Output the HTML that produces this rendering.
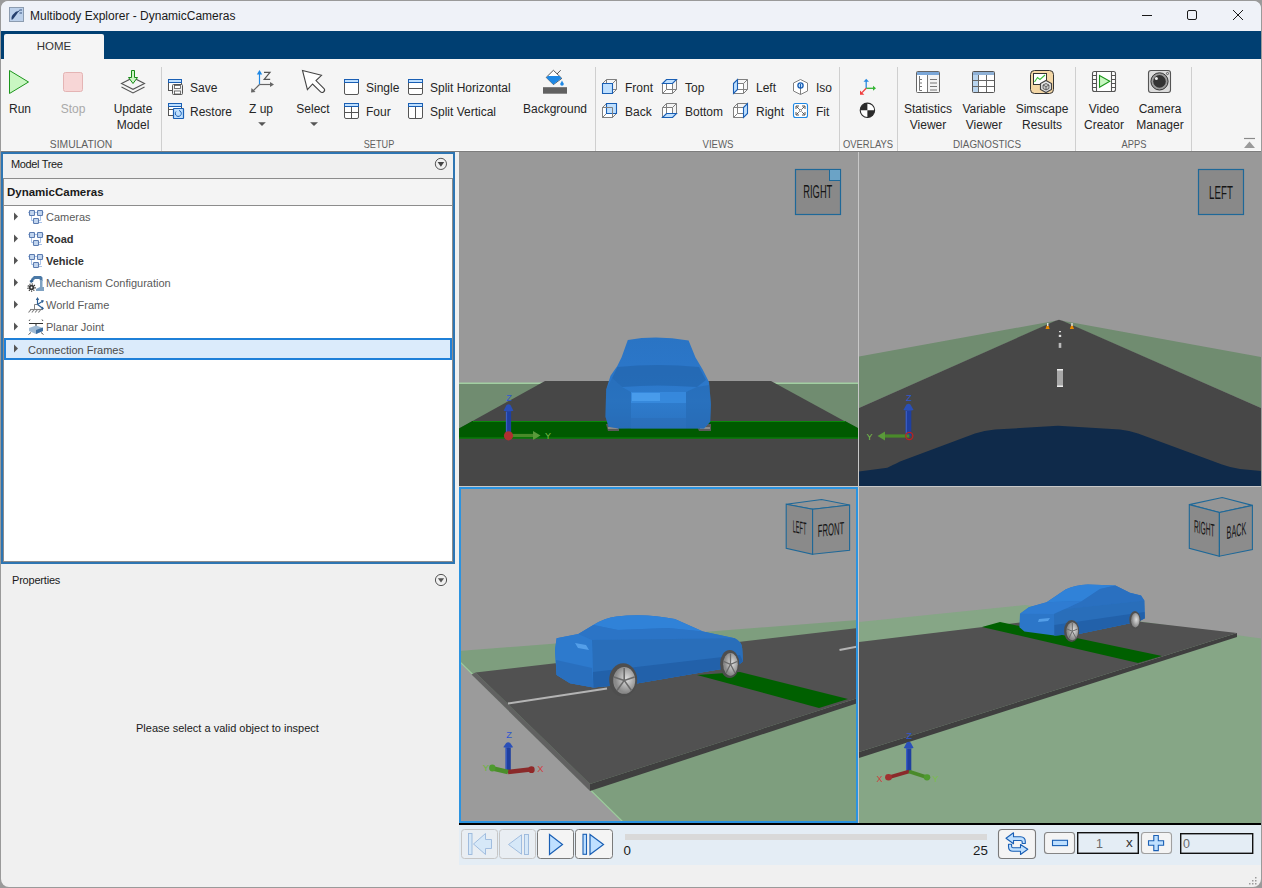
<!DOCTYPE html>
<html><head><meta charset="utf-8">
<style>
html,body{margin:0;padding:0;width:1262px;height:888px;overflow:hidden;background:#f0f0f0;}
body{position:relative;font-family:"Liberation Sans",sans-serif;font-size:12px;color:#222;}
.a{position:absolute;}
.t{position:absolute;white-space:nowrap;line-height:14px;font-size:12px;color:#262626;}
.c{text-align:center;}
.sl{position:absolute;white-space:nowrap;line-height:13px;font-size:11px;color:#5f5f5f;}
.sep{position:absolute;top:67px;width:1px;height:84px;background:#cfcfcf;}
svg{position:absolute;overflow:visible;}
</style></head>
<body>
<!-- window frame -->
<div class="a" style="left:0;top:0;width:1262px;height:888px;background:#9a9a9a;"></div>
<div class="a" style="left:1px;top:1px;width:1260px;height:886px;background:#f0f0f0;border-radius:8px;"></div>
<!-- title bar -->
<div class="a" style="left:1px;top:1px;width:1260px;height:30px;background:#eff2f8;border-radius:7px 7px 0 0;"></div>
<div class="t" style="left:30px;top:9px;color:#1a1a1a;">Multibody Explorer - DynamicCameras</div>
<!-- ribbon tab bar -->
<div class="a" style="left:1px;top:31px;width:1260px;height:28px;background:#003f72;"></div>
<div class="a" style="left:4px;top:34px;width:100px;height:25px;background:#f5f5f5;border-radius:2px 2px 0 0;"></div>
<div class="t" style="left:4px;top:39px;width:100px;text-align:center;color:#333;font-size:11.5px;">HOME</div>
<!-- ribbon body -->
<div class="a" style="left:1px;top:59px;width:1260px;height:92px;background:#f5f5f5;"></div>
<div class="a" style="left:1px;top:150px;width:1260px;height:1px;background:#fbfbfb;"></div>
<div class="a" style="left:1px;top:151px;width:1260px;height:1px;background:#7d7d7d;"></div>


<!-- ribbon content -->
<div class="sep" style="left:161px;"></div>
<div class="sep" style="left:595px;"></div>
<div class="sep" style="left:839px;"></div>
<div class="sep" style="left:897px;"></div>
<div class="sep" style="left:1075px;"></div>
<div class="sep" style="left:1191px;"></div>

<div class="t c" style="left:-30px;width:100px;top:102px;">Run</div>
<div class="t c" style="left:23px;width:100px;top:102px;color:#a9a9a9;">Stop</div>
<div class="t c" style="left:83px;width:100px;top:102px;">Update</div>
<div class="t c" style="left:83px;width:100px;top:118px;">Model</div>
<div class="t" style="left:190px;top:81px;">Save</div>
<div class="t" style="left:190px;top:105px;">Restore</div>
<div class="t c" style="left:211px;width:100px;top:102px;">Z up</div>
<div class="t c" style="left:263px;width:100px;top:102px;">Select</div>
<div class="t" style="left:366px;top:81px;">Single</div>
<div class="t" style="left:366px;top:105px;">Four</div>
<div class="t" style="left:430px;top:81px;">Split Horizontal</div>
<div class="t" style="left:430px;top:105px;">Split Vertical</div>
<div class="t c" style="left:505px;width:100px;top:102px;">Background</div>
<div class="t" style="left:625px;top:81px;">Front</div>
<div class="t" style="left:625px;top:105px;">Back</div>
<div class="t" style="left:685px;top:81px;">Top</div>
<div class="t" style="left:685px;top:105px;">Bottom</div>
<div class="t" style="left:756px;top:81px;">Left</div>
<div class="t" style="left:756px;top:105px;">Right</div>
<div class="t" style="left:816px;top:81px;">Iso</div>
<div class="t" style="left:816px;top:105px;">Fit</div>
<div class="t c" style="left:878px;width:100px;top:102px;">Statistics</div>
<div class="t c" style="left:878px;width:100px;top:118px;">Viewer</div>
<div class="t c" style="left:934px;width:100px;top:102px;">Variable</div>
<div class="t c" style="left:934px;width:100px;top:118px;">Viewer</div>
<div class="t c" style="left:992px;width:100px;top:102px;">Simscape</div>
<div class="t c" style="left:992px;width:100px;top:118px;">Results</div>
<div class="t c" style="left:1054px;width:100px;top:102px;">Video</div>
<div class="t c" style="left:1054px;width:100px;top:118px;">Creator</div>
<div class="t c" style="left:1110px;width:100px;top:102px;">Camera</div>
<div class="t c" style="left:1110px;width:100px;top:118px;">Manager</div>

<div class="sl c" style="left:31.2px;width:100px;top:137.7px;transform:scaleX(0.938);">SIMULATION</div>
<div class="sl c" style="left:328.8px;width:100px;top:137.7px;transform:scaleX(0.831);">SETUP</div>
<div class="sl c" style="left:668.0px;width:100px;top:137.7px;transform:scaleX(0.873);">VIEWS</div>
<div class="sl c" style="left:818.3px;width:100px;top:137.7px;transform:scaleX(0.855);">OVERLAYS</div>
<div class="sl c" style="left:936.5px;width:100px;top:137.7px;transform:scaleX(0.897);">DIAGNOSTICS</div>
<div class="sl c" style="left:1084.0px;width:100px;top:137.7px;transform:scaleX(0.850);">APPS</div>

<svg width="1262" height="160" style="left:0;top:0;">
 <!-- title icon -->
 <rect x="9.5" y="7.5" width="14" height="14" fill="#bcd0ea" stroke="#8c9cb0"/>
 <path d="M11.5 19.5 Q11 17 12.5 15 L15.5 12 Q17 10.8 18.5 11.5 L16.5 14.5 L13.5 18.5 Q12.5 20 11.5 19.5 Z" fill="#26406e"/>
 <path d="M18.2 12 L19.5 10.2 M19.5 13 L22 13 M19.5 10 L22 10" stroke="#3a5580" stroke-width="1"/>
 <!-- window controls -->
 <line x1="1142" y1="15.5" x2="1152" y2="15.5" stroke="#1a1a1a" stroke-width="1"/>
 <rect x="1187.5" y="10.5" width="9" height="9" rx="1.5" fill="none" stroke="#1a1a1a" stroke-width="1"/>
 <path d="M1233 10 L1243 20 M1243 10 L1233 20" stroke="#1a1a1a" stroke-width="1"/>
 <!-- Run -->
 <path d="M9.5 70.5 L28.5 82 L9.5 93.5 Z" fill="#c9f7c2" stroke="#1c961c" stroke-width="1"/>
 <!-- Stop -->
 <rect x="63.5" y="72.5" width="19" height="19" rx="2" fill="#f7d6d6" stroke="#e4b4b4"/>
 <!-- Update model -->
 <path d="M121.5 87 L133 93 L144.5 87" fill="none" stroke="#555" stroke-width="1.1"/>
 <path d="M121.5 83.5 L133 77.7 L144.5 83.5 L133 89.3 Z" fill="#f5f5f5" stroke="#555" stroke-width="1.1"/>
 <path d="M131.5 70.5 L134.5 70.5 L134.5 77.5 L137.5 77.5 L133 83.5 L128.5 77.5 L131.5 77.5 Z" fill="#ccf5c5" stroke="#178a17" stroke-width="1"/>
 <!-- Save -->
 <rect x="168.5" y="79.5" width="13" height="11" fill="#fff" stroke="#555"/>
 <rect x="168.5" y="79.5" width="13" height="3" fill="#bfe0ff" stroke="#1a5fb4"/>
 <rect x="172.5" y="84.5" width="10" height="10" rx="1" fill="#f0f0f0" stroke="#555"/>
 <rect x="174.5" y="85.5" width="6" height="3" fill="#fff" stroke="#555" stroke-width="0.8"/>
 <rect x="174.5" y="91" width="6" height="3" fill="#fff" stroke="#555" stroke-width="0.8"/>
 <!-- Restore -->
 <rect x="168.5" y="103.5" width="13" height="12" fill="#fff" stroke="#555"/>
 <rect x="168.5" y="103.5" width="13" height="3" fill="#bfe0ff" stroke="#1a5fb4"/>
 <line x1="168.5" y1="109.5" x2="173" y2="109.5" stroke="#555"/>
 <rect x="173.5" y="108.5" width="10" height="10" rx="0.5" fill="#bfe0ff" stroke="#1a5fb4" stroke-width="1.2"/>
 <path d="M176 111.5 A3 3 0 1 0 179 110.5" fill="none" stroke="#1a5fb4" stroke-width="1"/>
 <!-- Z up -->
 <path d="M259.5 84.5 L259.5 72" stroke="#1e88e5" stroke-width="1.2"/>
 <path d="M256.8 74.5 L259.5 70 L262.2 74.5 Z" fill="#1e88e5"/>
 <path d="M259.5 84.5 L271 84.5" stroke="#666" stroke-width="1.2"/>
 <path d="M270 82 L274 84.5 L270 87 Z" fill="#666"/>
 <path d="M259.5 84.5 L253 91" stroke="#666" stroke-width="1.2"/>
 <path d="M251 92.5 L251.5 88 L255.5 92 Z" fill="#666"/>
 <path d="M264 72.3 L270 72.3 L264.2 79.3 L270.2 79.3" fill="none" stroke="#555" stroke-width="1.2"/>
 <path d="M258.2 122.2 L265.8 122.2 L262 126 Z" fill="#555"/>
 <!-- Select -->
 <path d="M302.5 70.5 L321.5 75.3 L316 80.6 L324 88.5 Q325.5 90.3 323.5 92 Q321.8 93.2 320.3 91.7 L312.6 84 L307.4 89.7 Z" fill="#fff" stroke="#444" stroke-width="1.1"/>
 <path d="M310.1 122.2 L318 122.2 L314 126 Z" fill="#555"/>
 <!-- Single -->
 <rect x="344.5" y="79.5" width="14" height="15" rx="1.5" fill="#fff" stroke="#555"/>
 <rect x="344.5" y="79.5" width="14" height="3" fill="#bfe0ff" stroke="#1a5fb4"/>
 <!-- Four -->
 <rect x="344.5" y="103.5" width="14" height="15" rx="1.5" fill="#fff" stroke="#555"/>
 <path d="M351.5 106 L351.5 118.5 M344.5 112.5 L358.5 112.5" stroke="#555"/>
 <rect x="344.5" y="103.5" width="14" height="3" fill="#bfe0ff" stroke="#1a5fb4"/>
 <!-- Split H -->
 <rect x="408.5" y="79.5" width="14" height="15" rx="1.5" fill="#fff" stroke="#555"/>
 <path d="M408.5 88.5 L422.5 88.5" stroke="#555"/>
 <rect x="408.5" y="79.5" width="14" height="3" fill="#bfe0ff" stroke="#1a5fb4"/>
 <!-- Split V -->
 <rect x="408.5" y="103.5" width="14" height="15" rx="1.5" fill="#fff" stroke="#555"/>
 <path d="M415.5 106 L415.5 118.5" stroke="#555"/>
 <rect x="408.5" y="103.5" width="14" height="3" fill="#bfe0ff" stroke="#1a5fb4"/>
 <!-- Background -->
 <path d="M553.4 70.3 L561.8 78.4 L553.4 84.6 L546.2 77.4 Z" fill="#fff" stroke="#444" stroke-width="0.9"/>
 <path d="M548 76 L559.5 76 L561.5 78.3 L553.4 84.6 L546.3 77.4 Z" fill="#1e88e5"/>
 <path d="M557 74 L560.7 70.2" stroke="#444" stroke-width="0.9"/>
 <path d="M562 80.5 Q564 83.5 562 85 Q560 83.5 562 80.5 Z" fill="#1e88e5"/>
 <circle cx="562" cy="84" r="1.8" fill="#1e88e5"/>
 <rect x="543" y="87.2" width="24" height="6.5" fill="#616161"/>
 <!-- view cubes -->
 <polygon points="602.5,83.5 612.5,83.5 612.5,93.5 602.5,93.5" fill="#fff" stroke="#808080"/>
<polygon points="606.5,79.5 616.5,79.5 616.5,89.5 606.5,89.5" fill="none" stroke="#808080"/>
<line x1="602.5" y1="83.5" x2="606.5" y2="79.5" stroke="#808080"/>
<line x1="612.5" y1="83.5" x2="616.5" y2="79.5" stroke="#808080"/>
<line x1="612.5" y1="93.5" x2="616.5" y2="89.5" stroke="#808080"/>
<line x1="602.5" y1="93.5" x2="606.5" y2="89.5" stroke="#808080"/>
<polygon points="602.5,83.5 612.5,83.5 612.5,93.5 602.5,93.5" fill="#bfe0ff" stroke="#1a5fb4" stroke-width="1.1"/>
<polygon points="602.5,107.5 612.5,107.5 612.5,117.5 602.5,117.5" fill="#fff" stroke="#808080"/>
<polygon points="606.5,103.5 616.5,103.5 616.5,113.5 606.5,113.5" fill="none" stroke="#808080"/>
<line x1="602.5" y1="107.5" x2="606.5" y2="103.5" stroke="#808080"/>
<line x1="612.5" y1="107.5" x2="616.5" y2="103.5" stroke="#808080"/>
<line x1="612.5" y1="117.5" x2="616.5" y2="113.5" stroke="#808080"/>
<line x1="602.5" y1="117.5" x2="606.5" y2="113.5" stroke="#808080"/>
<polygon points="606.5,103.5 616.5,103.5 616.5,113.5 606.5,113.5" fill="#bfe0ff" stroke="#1a5fb4" stroke-width="1.1"/>
<polygon points="602.5,107.5 612.5,107.5 612.5,117.5 602.5,117.5" fill="none" stroke="#808080"/>
<polygon points="662.5,83.5 672.5,83.5 672.5,93.5 662.5,93.5" fill="#fff" stroke="#808080"/>
<polygon points="666.5,79.5 676.5,79.5 676.5,89.5 666.5,89.5" fill="none" stroke="#808080"/>
<line x1="662.5" y1="83.5" x2="666.5" y2="79.5" stroke="#808080"/>
<line x1="672.5" y1="83.5" x2="676.5" y2="79.5" stroke="#808080"/>
<line x1="672.5" y1="93.5" x2="676.5" y2="89.5" stroke="#808080"/>
<line x1="662.5" y1="93.5" x2="666.5" y2="89.5" stroke="#808080"/>
<polygon points="662.5,83.5 666.5,79.5 676.5,79.5 672.5,83.5" fill="#bfe0ff" stroke="#1a5fb4" stroke-width="1.1"/>
<polygon points="662.5,107.5 672.5,107.5 672.5,117.5 662.5,117.5" fill="#fff" stroke="#808080"/>
<polygon points="666.5,103.5 676.5,103.5 676.5,113.5 666.5,113.5" fill="none" stroke="#808080"/>
<line x1="662.5" y1="107.5" x2="666.5" y2="103.5" stroke="#808080"/>
<line x1="672.5" y1="107.5" x2="676.5" y2="103.5" stroke="#808080"/>
<line x1="672.5" y1="117.5" x2="676.5" y2="113.5" stroke="#808080"/>
<line x1="662.5" y1="117.5" x2="666.5" y2="113.5" stroke="#808080"/>
<polygon points="662.5,117.5 666.5,113.5 676.5,113.5 672.5,117.5" fill="#bfe0ff" stroke="#1a5fb4" stroke-width="1.1"/>
<polygon points="733.5,83.5 743.5,83.5 743.5,93.5 733.5,93.5" fill="#fff" stroke="#808080"/>
<polygon points="737.5,79.5 747.5,79.5 747.5,89.5 737.5,89.5" fill="none" stroke="#808080"/>
<line x1="733.5" y1="83.5" x2="737.5" y2="79.5" stroke="#808080"/>
<line x1="743.5" y1="83.5" x2="747.5" y2="79.5" stroke="#808080"/>
<line x1="743.5" y1="93.5" x2="747.5" y2="89.5" stroke="#808080"/>
<line x1="733.5" y1="93.5" x2="737.5" y2="89.5" stroke="#808080"/>
<polygon points="733.5,83.5 737.5,79.5 737.5,89.5 733.5,93.5" fill="#bfe0ff" stroke="#1a5fb4" stroke-width="1.1"/>
<polygon points="733.5,107.5 743.5,107.5 743.5,117.5 733.5,117.5" fill="#fff" stroke="#808080"/>
<polygon points="737.5,103.5 747.5,103.5 747.5,113.5 737.5,113.5" fill="none" stroke="#808080"/>
<line x1="733.5" y1="107.5" x2="737.5" y2="103.5" stroke="#808080"/>
<line x1="743.5" y1="107.5" x2="747.5" y2="103.5" stroke="#808080"/>
<line x1="743.5" y1="117.5" x2="747.5" y2="113.5" stroke="#808080"/>
<line x1="733.5" y1="117.5" x2="737.5" y2="113.5" stroke="#808080"/>
<polygon points="743.5,107.5 747.5,103.5 747.5,113.5 743.5,117.5" fill="#bfe0ff" stroke="#1a5fb4" stroke-width="1.1"/>
<polygon points="800.5,79.5 807.5,83 807.5,91 800.5,94.5 793.5,91 793.5,83" fill="#fff" stroke="#808080"/>
<path d="M800.5 87 L800.5 94.5" stroke="#808080"/>
<circle cx="800.5" cy="85.5" r="2.6" fill="#bfe0ff" stroke="#1a5fb4" stroke-width="1.3"/>
<path d="M800.5 84 L800.5 88.5" stroke="#1a5fb4" stroke-width="1"/>
<rect x="793.5" y="103.5" width="14" height="14" rx="2" fill="#fff" stroke="#1e88e5" stroke-width="1.1"/>
<path d="M796.5 106.5 L798.8 108.8 M804.5 106.5 L802.2 108.8 M796.5 114.5 L798.8 112.2 M804.5 114.5 L802.2 112.2" stroke="#555" stroke-width="1"/>
<path d="M796 109 L796 106 L799 106 M802 106 L805 106 L805 109 M796 112 L796 115 L799 115 M802 115 L805 115 L805 112" fill="none" stroke="#555" stroke-width="1"/>
<rect x="799.5" y="109.5" width="2" height="2" fill="none" stroke="#777" stroke-width="0.7"/>
 <!-- Overlays axes -->
 <path d="M866.2 88.3 L866.2 81" stroke="#2a8ae0" stroke-width="1.3"/>
 <path d="M863.5 81.8 L866.2 78.8 L869 81.8 Z" fill="#2a8ae0"/>
 <path d="M866.2 88.3 L873.5 88.3" stroke="#35b535" stroke-width="1.3"/>
 <path d="M873 85.8 L876 88.3 L873 90.8 Z" fill="#35b535"/>
 <path d="M866.2 88.3 L862 92.6" stroke="#f03c3c" stroke-width="1.3"/>
 <path d="M860 90.5 L860 94.8 L864.3 94.8 Z" fill="#f03c3c"/>
 <!-- CoM -->
 <circle cx="867.4" cy="110.3" r="7.2" fill="#fff" stroke="#2a2a2a" stroke-width="1.1"/>
 <path d="M867.4 110.3 L867.4 103.1 A7.2 7.2 0 0 0 860.2 110.3 Z" fill="#2a2a2a"/>
 <path d="M867.4 110.3 L867.4 117.5 A7.2 7.2 0 0 0 874.6 110.3 Z" fill="#2a2a2a"/>
 <!-- Statistics viewer -->
 <rect x="916.5" y="71.5" width="23" height="21" rx="1" fill="#f4f4f4" stroke="#666"/>
 <rect x="917" y="72" width="22" height="3" fill="#7ba7d8"/>
 <rect x="917" y="75" width="10" height="17" fill="#fff"/>
 <path d="M927.5 75 L927.5 92" stroke="#777"/>
 <path d="M919.5 76 L919.5 90.5 L922 90.5 M919.5 79.5 L922 79.5 M919.5 83 L922 83 M919.5 86.5 L922 86.5" stroke="#777" fill="none"/>
 <path d="M930 79.5 L937 79.5 M930 83 L937 83 M930 86.5 L937 86.5 M930 90 L937 90" stroke="#777"/>
 <!-- Variable viewer -->
 <rect x="972.5" y="71.5" width="22" height="21" rx="1" fill="#fff" stroke="#555"/>
 <rect x="973" y="72" width="21" height="3" fill="#8fb1d6"/>
 <rect x="973" y="75" width="5" height="17" fill="#b9d5ef"/>
 <path d="M978.5 75 L978.5 92 M986.5 75 L986.5 92 M973 80.5 L994 80.5 M973 86.5 L994 86.5" stroke="#666"/>
 <!-- Simscape results -->
 <rect x="1030.5" y="70.5" width="23" height="23" rx="4" fill="#f4d7a6" stroke="#333"/>
 <rect x="1033.5" y="73.5" width="13" height="11" fill="#fff" stroke="#333"/>
 <path d="M1034.5 82 L1037.5 77.5 L1040 79.5 L1045 75" fill="none" stroke="#3cc03c" stroke-width="1.1"/>
 <path d="M1046 80.5 L1051.5 83.5 L1051.5 89.5 L1046 92.5 L1040.5 89.5 L1040.5 83.5 Z" fill="#e8e8e8" stroke="#444" stroke-width="1.2"/>
 <path d="M1046 83.5 L1049 85 L1049 88.5 L1046 90 L1043 88.5 L1043 85 Z M1043 85 L1046 86.5 L1049 85 M1046 86.5 L1046 90" fill="#ccc" stroke="#444" stroke-width="0.8"/>
 <!-- Video creator -->
 <rect x="1092.5" y="71.5" width="23" height="20" rx="2" fill="#fff" stroke="#555" stroke-width="1.1"/>
 <path d="M1096.5 71.5 L1096.5 91.5 M1111.5 71.5 L1111.5 91.5" stroke="#555" stroke-width="1.1"/>
 <path d="M1092.5 75.5 L1096.5 75.5 M1092.5 79.5 L1096.5 79.5 M1092.5 83.5 L1096.5 83.5 M1092.5 87.5 L1096.5 87.5 M1111.5 75.5 L1115.5 75.5 M1111.5 79.5 L1115.5 79.5 M1111.5 83.5 L1115.5 83.5 M1111.5 87.5 L1115.5 87.5" stroke="#555"/>
 <path d="M1099.5 75.5 L1109.8 81.3 L1099.5 87.3 Z" fill="#c9f7c2" stroke="#1c961c" stroke-width="1.1"/>
 <!-- Camera manager -->
 <rect x="1148.5" y="70.5" width="22" height="22" rx="2.5" fill="#dcdcdc" stroke="#555" stroke-width="1.1"/>
 <circle cx="1159.5" cy="81.4" r="8.6" fill="#999" stroke="#333" stroke-width="1"/>
 <circle cx="1159.5" cy="81.4" r="6.3" fill="#333"/>
 <circle cx="1156.4" cy="78.5" r="1.5" fill="#eee"/>
 <circle cx="1167.5" cy="73.5" r="1.1" fill="none" stroke="#333" stroke-width="0.7"/>
 <!-- collapse -->
 <path d="M1244 138.5 L1255 138.5" stroke="#8a8a8a" stroke-width="1.2"/>
 <path d="M1244 148 L1249.5 141.5 L1255 148 Z" fill="#9a9a9a"/>
</svg>

<!-- left panel -->
<div class="a" style="left:1px;top:152px;width:458px;height:713px;background:#f0f0f0;"></div>
<div class="a" style="left:1px;top:152px;width:450px;height:408px;border:2px solid #2e75b2;background:#fff;"></div>
<div class="a" style="left:3px;top:154px;width:450px;height:24px;background:#f0f0f0;"></div>
<div class="a" style="left:3px;top:178px;width:450px;height:1px;background:#8c8c8c;"></div>
<div class="a" style="left:3px;top:179px;width:1px;height:383px;background:#8c8c8c;"></div>
<div class="a" style="left:452px;top:179px;width:1px;height:383px;background:#8c8c8c;"></div>
<div class="a" style="left:3px;top:561px;width:450px;height:1px;background:#8c8c8c;"></div>
<div class="a" style="left:4px;top:179px;width:448px;height:26px;background:#f4f4f4;"></div>
<div class="a" style="left:4px;top:205px;width:448px;height:1px;background:#8c8c8c;"></div>
<div class="t" style="left:11px;top:157.5px;font-size:11px;line-height:13px;color:#1a1a1a;letter-spacing:-0.35px;">Model Tree</div>
<div class="t" style="left:7px;top:185.4px;font-size:11.5px;font-weight:bold;color:#1a1a1a;">DynamicCameras</div>
<div class="a" style="left:4px;top:338px;width:444px;height:18px;border:2px solid #1f80d8;background:#dbebfb;"></div>
<div class="t" style="left:46px;top:211.4px;font-size:11px;line-height:13px;color:#5a5a5a;">Cameras</div>
<div class="t" style="left:46px;top:233.4px;font-size:11px;line-height:13px;color:#333;font-weight:bold;">Road</div>
<div class="t" style="left:46px;top:255.4px;font-size:11px;line-height:13px;color:#333;font-weight:bold;">Vehicle</div>
<div class="t" style="left:46px;top:277.4px;font-size:11px;line-height:13px;color:#5a5a5a;">Mechanism Configuration</div>
<div class="t" style="left:46px;top:299.4px;font-size:11px;line-height:13px;color:#5a5a5a;">World Frame</div>
<div class="t" style="left:46px;top:321.4px;font-size:11px;line-height:13px;color:#5a5a5a;">Planar Joint</div>
<div class="t" style="left:28px;top:343.6px;font-size:11px;line-height:13px;color:#4a4a4a;">Connection Frames</div>
<div class="t" style="left:12px;top:573.7px;font-size:11px;line-height:13px;color:#1a1a1a;letter-spacing:-0.2px;">Properties</div>
<div class="t" style="left:136px;top:721.7px;font-size:11px;line-height:13px;color:#1a1a1a;">Please select a valid object to inspect</div>
<svg width="460" height="600" style="left:0;top:0;">
 <g fill="#555">
  <path d="M14 212.5 L18 216.5 L14 220.5 Z"/>
  <path d="M14 234.5 L18 238.5 L14 242.5 Z"/>
  <path d="M14 256.5 L18 260.5 L14 264.5 Z"/>
  <path d="M14 278.5 L18 282.5 L14 286.5 Z"/>
  <path d="M14 300.5 L18 304.5 L14 308.5 Z"/>
  <path d="M14 322.5 L18 326.5 L14 330.5 Z"/>
  <path d="M14 344.5 L18 348.5 L14 352.5 Z"/>
 </g>
 <path d="M28 212.5 L43.5 212.5 M31.5 215 L31.5 220.5 L33.5 220.5 M40.5 215 L40.5 220.5 L38.5 220.5 M38.5 222.5 L42 222.5" stroke="#a9c3ea" stroke-width="1" fill="none"/>
<rect x="29.5" y="210.5" width="5" height="5" rx="0.8" fill="#c3d6ef" stroke="#5b7bb0" stroke-width="1.1"/>
<rect x="37.5" y="210.5" width="5" height="5" rx="0.8" fill="#c3d6ef" stroke="#5b7bb0" stroke-width="1.1"/>
<rect x="33.5" y="218.5" width="5" height="5" rx="0.8" fill="#c3d6ef" stroke="#5b7bb0" stroke-width="1.1"/>
<path d="M28 234.5 L43.5 234.5 M31.5 237 L31.5 242.5 L33.5 242.5 M40.5 237 L40.5 242.5 L38.5 242.5 M38.5 244.5 L42 244.5" stroke="#a9c3ea" stroke-width="1" fill="none"/>
<rect x="29.5" y="232.5" width="5" height="5" rx="0.8" fill="#c3d6ef" stroke="#5b7bb0" stroke-width="1.1"/>
<rect x="37.5" y="232.5" width="5" height="5" rx="0.8" fill="#c3d6ef" stroke="#5b7bb0" stroke-width="1.1"/>
<rect x="33.5" y="240.5" width="5" height="5" rx="0.8" fill="#c3d6ef" stroke="#5b7bb0" stroke-width="1.1"/>
<path d="M28 256.5 L43.5 256.5 M31.5 259 L31.5 264.5 L33.5 264.5 M40.5 259 L40.5 264.5 L38.5 264.5 M38.5 266.5 L42 266.5" stroke="#a9c3ea" stroke-width="1" fill="none"/>
<rect x="29.5" y="254.5" width="5" height="5" rx="0.8" fill="#c3d6ef" stroke="#5b7bb0" stroke-width="1.1"/>
<rect x="37.5" y="254.5" width="5" height="5" rx="0.8" fill="#c3d6ef" stroke="#5b7bb0" stroke-width="1.1"/>
<rect x="33.5" y="262.5" width="5" height="5" rx="0.8" fill="#c3d6ef" stroke="#5b7bb0" stroke-width="1.1"/>
<path d="M31 279 L34 276 L41 276 L42.5 277.5 L42.5 281 L40 281 L39.5 279 L35 279 L33 281 Z" fill="#4b79a6"/>
<path d="M40 280 L42.5 280 L42.5 287 L44 287 L44 291 L36 291 L36 289 L40 287 Z" fill="#7fa2c2"/>
<path d="M29.5 281 L32 279 L33.5 281.5 L31 283 Z" fill="#2f5f8f"/>
<circle cx="31.5" cy="287.5" r="2.8" fill="#3a3a3a"/>
<circle cx="31.5" cy="287.5" r="3.6" fill="none" stroke="#3a3a3a" stroke-width="1.2" stroke-dasharray="1.2 1.2"/>
<circle cx="31.5" cy="287.5" r="0.9" fill="#fff"/>
<path d="M30 309.5 L43 309.5" stroke="#808080" stroke-width="1.1"/>
<path d="M28.5 312.5 L31 309.5 M31.8 312.5 L34.3 309.5 M35.1 312.5 L37.6 309.5 M38.4 312.5 L40.9 309.5" stroke="#808080" stroke-width="1.1"/>
<path d="M34.5 309 L34.5 304.5 L37.5 304.5" stroke="#808080" stroke-width="1" fill="none"/>
<path d="M37.5 304.5 L37.5 298.5 M37.5 304.5 L43 301 M37.5 304.5 L43 308.5" stroke="#2e5f94" stroke-width="1.2"/>
<path d="M35.8 300 L37.5 297 L39.2 300 Z M41 300 L44 300.5 L42.5 303 Z M41 309.5 L44 309 L42.5 306.5 Z" fill="#2e5f94"/>
<path d="M29 323.5 L43 323.5 M36 323.5 L36 331" stroke="#333" stroke-width="1.1"/>
<path d="M29 321 L30 319.5 M43 321 L42 319.5" stroke="#555" stroke-width="1"/>
<path d="M29 328 L36 325.5 L43 328 L43 331 L36 334 L29 331 Z" fill="#9fbad4"/>
<path d="M36 330 L43 327.5 L43 331 L36 334 Z" fill="#3d6fa3"/>
<path d="M28.5 334.5 L31 332.5 M43.5 334.5 L41 332.5" stroke="#555" stroke-width="1"/>
 <circle cx="440.9" cy="163.9" r="5.6" fill="none" stroke="#555" stroke-width="1"/>
 <path d="M437.6 162 L444.2 162 L440.9 166.8 Z" fill="#444"/>
 <circle cx="441" cy="580" r="5.6" fill="none" stroke="#555" stroke-width="1"/>
 <path d="M437.9 578.3 L444.1 578.3 L441 582.6 Z" fill="#555"/>
</svg>


<!-- viewports -->
<svg width="1262" height="888" style="left:0;top:0;">
 <defs>
  <clipPath id="cTL"><rect x="459" y="152" width="399" height="334"/></clipPath>
  <clipPath id="cTR"><rect x="859" y="152" width="402" height="334"/></clipPath>
  <clipPath id="cBL"><rect x="459" y="487" width="399" height="336"/></clipPath>
  <clipPath id="cBR"><rect x="859" y="487" width="402" height="336"/></clipPath>
  <linearGradient id="carTL" x1="0" y1="0" x2="0" y2="1">
   <stop offset="0" stop-color="#2a74c4"/><stop offset="0.3" stop-color="#2b76c8"/>
   <stop offset="0.5" stop-color="#2c78ca"/><stop offset="0.7" stop-color="#2e7ccd"/>
   <stop offset="1" stop-color="#2b72c0"/>
  </linearGradient>
  <linearGradient id="carS" x1="0" y1="0" x2="0" y2="1">
   <stop offset="0" stop-color="#2f80d6"/><stop offset="0.45" stop-color="#2a74c6"/>
   <stop offset="0.8" stop-color="#2368b6"/><stop offset="1" stop-color="#1f5ea6"/>
  </linearGradient>
  <radialGradient id="rim" cx="0.6" cy="0.45"><stop offset="0" stop-color="#e0e0e0"/><stop offset="1" stop-color="#8a8a8a"/></radialGradient>
 </defs>
 <rect x="459" y="152" width="802" height="671" fill="#c8c8c8"/>

 <!-- ===== TL ===== -->
 <g clip-path="url(#cTL)">
  <rect x="459" y="152" width="399" height="334" fill="#999999"/>
  <rect x="459" y="383" width="399" height="56" fill="#708c70"/>
  <rect x="459" y="382.5" width="399" height="1.5" fill="#a2cfa2"/>
  <polygon points="545,381 771,381 858,428.5 858,486 459,486 459,428.5" fill="#474747"/>
  <polygon points="472.5,421 845,421 858,428 858,438.5 459,438.5 459,428.5" fill="#005a00"/>
  <rect x="473" y="421" width="372" height="1" fill="#0a8a0a"/>
  <rect x="459" y="437.5" width="399" height="1" fill="#0a8a0a"/>
  <!-- car -->
  <path d="M606 424 L619 424 L619 431 L608 431 Z M696 424 L711 424 L711 431 L699 431 Z" fill="#5a5a5a"/>
  <path d="M608 428 L618 428 M700 428 L710 428" stroke="#bbb" stroke-width="1"/>
  <path d="M627.8 339.9 Q657 335 688.6 340.5 L695.4 357.3 L702.8 369.7 L709 382 L710.9 404.3 L710.2 421.7 L704 428.5 L618.5 428.5 L608.6 426.7 L605.5 416.7 L606.2 389.5 L610.5 375.8 L617.3 366 L621.6 357.3 Z" fill="url(#carTL)"/>
  <path d="M617.5 367 Q657 363 699 367 L706 380 L697 387 Q657 384 622 387 L612 378 Z" fill="#2262a8" opacity="0.6"/>
  <path d="M606 390 L612 378 L622 387 L631 392 L631 428 L618.5 428.5 L608.6 426.7 L605.5 416.7 Z" fill="#2466ae" opacity="0.45"/>
  <path d="M709.5 385 L697 387 L686 392 L686 428.5 L704 428.5 L710.2 421.7 L710.9 404.3 Z" fill="#2466ae" opacity="0.5"/>
  <path d="M631 392 L686 392 L686 403 L631 403 Z" fill="#3a8ee2" opacity="0.7"/>
  <path d="M632 393 L660 393 L660 401 L632 401 Z" fill="#55a8f5" opacity="0.6"/>
  <path d="M631 418 L686 418 L686 428.5 L631 428.5 Z" fill="#2a6cb6" opacity="0.5"/>
  <!-- axes -->
  <path d="M508.5 435.5 L508.5 411.2" stroke="#1f3f9f" stroke-width="5.2"/>
  <path d="M506.5 435.5 L506.5 411.7" stroke="#3a5fc8" stroke-width="1.2"/>
  <path d="M503.6 410.7 L506.5 405 Q508.5 403.5 510.5 405 L513.4 410.7 Q508.5 412.2 503.6 410.7 Z" fill="#2a4fb8"/>
  <path d="M508.5 435.5 L534 435.5" stroke="#4a8a2a" stroke-width="3.2"/>
  <path d="M533 431 L540.5 435.5 L533 440 Z" fill="#5a9a3a"/>
  <circle cx="508.5" cy="435.8" r="4.6" fill="#b03030"/>
  <text x="509" y="400.8" font-family="Liberation Sans" font-size="9.4" fill="#2f56d0" text-anchor="middle">Z</text>
  <text x="545" y="439" font-family="Liberation Sans" font-size="9" fill="#7abf4a">Y</text>
  <!-- cube -->
  <rect x="795.5" y="169.5" width="45" height="45" fill="#898989" stroke="#1e6898" stroke-width="1.2"/>
  <rect x="829.5" y="169.5" width="11" height="11" fill="#6ba3c6" stroke="#1e6898" stroke-width="1"/>
<text x="0" y="0" font-family="Liberation Sans" font-size="18.7" fill="#151515" text-anchor="middle" transform="translate(817.8 197.8) skewY(0) scale(0.5 1)">RIGHT</text>
 </g>

 <!-- ===== TR ===== -->
 <g clip-path="url(#cTR)">
  <rect x="859" y="152" width="402" height="334" fill="#999999"/>
  <polygon points="859,356.5 1057,320.5 859,408" fill="#708c70"/>
  <polygon points="1061,320.5 1261,357 1261,408" fill="#708c70"/>
  <polygon points="1055,321 1059,319.8 1063,321 1261,408 1261,486 859,486 859,408" fill="#474747"/>
  <path d="M859 471.6 L887.3 467.7 Q892 465.5 900 461.5 L975 433.5 Q984 430.6 995 429.5 L1058 425.8 L1120 429.5 Q1129 430.6 1138 433.5 L1222 464.5 Q1230.8 467.7 1240 469 L1261 471 L1261 486 L859 486 Z" fill="#0f2a4a"/>
  <rect x="1059" y="331" width="2" height="1.2" fill="#ddd"/>
  <rect x="1058.8" y="334.8" width="2.4" height="2.2" fill="#ddd"/>
  <rect x="1058.7" y="342.9" width="2.6" height="5" fill="#bbb"/>
  <rect x="1057" y="369" width="6" height="18" fill="#a8a8a8"/>
  <rect x="1057" y="369" width="6" height="1.5" fill="#eee"/>
  <rect x="1057" y="385.5" width="6" height="1.5" fill="#eee"/>
  <path d="M1045.5 329 L1047.6 323.5 L1049.7 329 Z" fill="#e68a00"/>
  <rect x="1047" y="323" width="1.4" height="3" fill="#ddd"/>
  <path d="M1069.8 329 L1071.9 323.5 L1074 329 Z" fill="#e68a00"/>
  <rect x="1071.3" y="323" width="1.4" height="3" fill="#ddd"/>
  <!-- axes -->
  <path d="M908.5 436 L908.5 410.4" stroke="#1f3f9f" stroke-width="5.6"/>
  <path d="M906.3000000000001 436 L906.3000000000001 410.9" stroke="#3a5fc8" stroke-width="1.2"/>
  <path d="M903.4 409.9 L906.5 404.6 Q908.5 403.1 910.5 404.6 L913.6 409.9 Q908.5 411.4 903.4 409.9 Z" fill="#2a4fb8"/>
  <path d="M909.3 436 L884 436" stroke="#4a8a2a" stroke-width="3.2"/>
  <path d="M885 431.5 L877.5 436 L885 440.5 Z" fill="#5a9a3a"/>
  <circle cx="909.3" cy="436" r="3.6" fill="none" stroke="#c02020" stroke-width="1.2"/>
  <text x="908.9" y="400.9" font-family="Liberation Sans" font-size="9.4" fill="#2f56d0" text-anchor="middle">Z</text>
  <text x="866.5" y="440" font-family="Liberation Sans" font-size="9" fill="#7abf4a">Y</text>
  <rect x="1198.5" y="169.5" width="45" height="45" fill="#898989" stroke="#1e6898" stroke-width="1.2"/>
<text x="0" y="0" font-family="Liberation Sans" font-size="18.7" fill="#151515" text-anchor="middle" transform="translate(1221 198.6) skewY(0) scale(0.52 1)">LEFT</text>
 </g>

 <!-- ===== BL ===== -->
 <g clip-path="url(#cBL)">
  <rect x="459" y="487" width="399" height="336" fill="#9b9b9b"/>
  <polygon points="459,651 858,620 858,823 624,823 459,661" fill="#7e9e7e"/>
  <path d="M459 661 L624 823" stroke="#9ccc9c" stroke-width="1.2"/>
  <!-- road side face -->
  <polygon points="475.5,672.5 590,784 590,791 471.5,674.5" fill="#616161"/>
  <polygon points="590,784 858,698 858,703 590,791" fill="#3f3f3f"/>
  <polygon points="475.5,672.5 858,628 858,698 590,784" fill="#515151"/>
  <path d="M508 703.5 L607 688.5" stroke="#b4b4b4" stroke-width="2.2"/>
  <path d="M839.5 650 L858 646.5" stroke="#b4b4b4" stroke-width="2"/>
  <polygon points="697,675 740,672 848,699 819,708" fill="#006000"/>
  <!-- car -->
  <path d="M556.6 638.3 L578.3 634.1 L593.3 625 Q605 618 616.5 616.6 Q645 613 674.8 619.1 L703 631.6 L734.7 638.3 Q742 642 742.2 648.3 L743 661.6 L736.3 666.6 L638.2 683.2 L593.3 687.4 L570 683.2 L556.6 674.9 L555 650 Z" fill="#2c76c8"/>
  <path d="M593.3 625 Q605 618 616.5 616.6 Q645 613 674.8 619.1 L703 631.6 L668 628 L618 630 Z" fill="#3082d8"/>
  <path d="M618 630 L668 628 L703 631.6 L734.7 638.3 L592 640 L578.3 634.1 L593.3 625 Z" fill="#2b74c6"/>
  <path d="M592 640 L734.7 638.3 Q742 642 742.2 648.3 L743 661.6 L736.3 666.6 L638.2 683.2 L593.3 687.4 Z" fill="#296eba"/>
  <path d="M593 672 L740 655 L743 661.6 L736.3 666.6 L638.2 683.2 L593.3 687.4 Z" fill="#2261aa"/>
  <path d="M556.6 638.3 L578.3 634.1 L592 640 L593.3 687.4 L570 683.2 L556.6 674.9 L555 650 Z" fill="#2d7acd"/>
  <path d="M575 643 L586 645 L589 650 L578 648 Z" fill="#5ea9f0" opacity="0.8"/>
  <path d="M556 660 L592 668 L593.3 687.4 L570 683.2 L556.6 674.9 Z" fill="#2768b4" opacity="0.6"/>
  <ellipse cx="623.2" cy="679.9" rx="14" ry="16.6" fill="#4e4e4e"/>
  <ellipse cx="624.2" cy="680.4" rx="11" ry="13.4" fill="url(#rim)"/>
  <path d="M624.2 668 L624.2 680.4 M613.8 677 L624.2 680.4 M617 690.5 L624.2 680.4 M631.5 690.5 L624.2 680.4 M634.6 677 L624.2 680.4" stroke="#6a6a6a" stroke-width="1.6"/>
  <ellipse cx="729.7" cy="664" rx="9.6" ry="14" fill="#4e4e4e"/>
  <ellipse cx="730.5" cy="664.3" rx="7.3" ry="11.4" fill="url(#rim)"/>
  <path d="M730.5 653.5 L730.5 664.3 M723.8 661.5 L730.5 664.3 M726 673 L730.5 664.3 M735 673 L730.5 664.3 M737.2 661.5 L730.5 664.3" stroke="#6a6a6a" stroke-width="1.3"/>
  <!-- axes -->
  <path d="M508.2 772.5 L508.2 747.8" stroke="#1f3f9f" stroke-width="5.2"/>
  <path d="M506.2 772.5 L506.2 748.3" stroke="#3a5fc8" stroke-width="1.2"/>
  <path d="M503.3 747.3 L506.2 743 Q508.2 741.5 510.2 743 L513.1 747.3 Q508.2 748.8 503.3 747.3 Z" fill="#2a4fb8"/>
  <path d="M508 772 L530 769.5" stroke="#8a2a2a" stroke-width="4.6"/>
  <ellipse cx="531.5" cy="769.7" rx="3.2" ry="3.4" fill="#902828"/>
  <path d="M508 772 L493 768.5" stroke="#4a8e2a" stroke-width="4.6"/>
  <ellipse cx="492.3" cy="768" rx="3.2" ry="3.4" fill="#4e9a2e"/>
  <text x="509" y="737.8" font-family="Liberation Sans" font-size="9.4" fill="#2f56d0" text-anchor="middle">Z</text>
  <text x="540.5" y="772" font-family="Liberation Sans" font-size="9.4" fill="#d04040" text-anchor="middle">X</text>
  <text x="486" y="771" font-family="Liberation Sans" font-size="9.4" fill="#6ab83a" text-anchor="middle">Y</text>
  <!-- cube -->
  <polygon points="786.2,504.2 821.6,499.5 849.6,505 812.6,509.3" fill="#959595" stroke="#1e6898" stroke-width="1.1"/>
  <polygon points="786.2,504.2 812.6,509.3 812.6,554.2 786.2,548.3" fill="#8a8a8a" stroke="#1e6898" stroke-width="1.1"/>
  <polygon points="812.6,509.3 849.6,505 849.6,550.3 812.6,554.2" fill="#8c8c8c" stroke="#1e6898" stroke-width="1.1"/>
<text x="0" y="0" font-family="Liberation Sans" font-size="17.5" fill="#151515" text-anchor="middle" transform="translate(799.5 533.5) skewY(11) scale(0.32 1)">LEFT</text>
<text x="0" y="0" font-family="Liberation Sans" font-size="17.5" fill="#151515" text-anchor="middle" transform="translate(831 535.5) skewY(-6.6) scale(0.44 1)">FRONT</text>
  <!-- selection border -->
  <rect x="460" y="488" width="397" height="334" fill="none" stroke="#2b93e0" stroke-width="2"/>
 </g>

 <!-- ===== BR ===== -->
 <g clip-path="url(#cBR)">
  <rect x="859" y="487" width="402" height="336" fill="#9b9b9b"/>
  <polygon points="859,622 1025,605 1261,638.5 1261,823 859,823" fill="#86a686"/>
  <polygon points="859,752 1237,633 1237,637 859,758" fill="#3f3f3f"/>
  <polygon points="859,642 1082,615 1237,633 859,752" fill="#515151"/>
  <polygon points="982,627 1000,622 1162,656 1138,663" fill="#006000"/>
  <!-- car -->
  <path d="M1020 613.8 L1028.9 607.2 L1046.6 602.2 L1065.5 589.4 Q1075 585 1087.7 584.4 L1115.4 585.5 L1129.9 592.8 L1141 595.5 L1144.3 600.5 L1144.8 618.3 L1138.7 621.6 L1079.9 633.8 L1054.4 635.5 L1024.4 631.6 L1019.4 627.2 Z" fill="#2c76c8"/>
  <path d="M1046.6 602.2 L1065.5 589.4 Q1075 585 1087.7 584.4 L1115.4 585.5 L1100 589 L1082 601 Z" fill="#3082d8"/>
  <path d="M1082 601 L1100 589 L1115.4 585.5 L1129.9 592.8 L1141 595.5 L1144.3 600.5 L1065 609 Z" fill="#2a70c0"/>
  <path d="M1020 613.8 L1028.9 607.2 L1046.6 602.2 L1082 601 L1065 609 L1054 614 Z" fill="#2f7cd2"/>
  <path d="M1054 614 L1065 609 L1144.3 600.5 L1144.8 618.3 L1138.7 621.6 L1079.9 633.8 L1054.4 635.5 Z" fill="#296eba"/>
  <path d="M1054.4 625 L1144.5 612 L1144.8 618.3 L1138.7 621.6 L1079.9 633.8 L1054.4 635.5 Z" fill="#2261aa"/>
  <path d="M1039 619 L1050 618 L1048 621 L1038 622 Z" fill="#5ea9f0" opacity="0.8"/>
  <ellipse cx="1071.6" cy="631" rx="7.6" ry="11" fill="#4e4e4e"/>
  <ellipse cx="1072.3" cy="631.2" rx="5.8" ry="9" fill="url(#rim)"/>
  <path d="M1072.3 623 L1072.3 631.2 M1067 629 L1072.3 631.2 M1069 638 L1072.3 631.2 M1076 638 L1072.3 631.2 M1077.6 629 L1072.3 631.2" stroke="#6a6a6a" stroke-width="1"/>
  <ellipse cx="1134.9" cy="620" rx="5.6" ry="9" fill="#4e4e4e"/>
  <ellipse cx="1135.4" cy="620.2" rx="4.2" ry="7.3" fill="url(#rim)"/>
  <!-- axes -->
  <path d="M908.7 771.5 L908.7 748.5" stroke="#1f3f9f" stroke-width="5.2"/>
  <path d="M906.7 771.5 L906.7 749" stroke="#3a5fc8" stroke-width="1.2"/>
  <path d="M903.8000000000001 748 L906.7 742.6 Q908.7 741.1 910.7 742.6 L913.6 748 Q908.7 749.5 903.8000000000001 748 Z" fill="#2a4fb8"/>
  <path d="M909 771.5 L890 777" stroke="#8a2a2a" stroke-width="3.6"/>
  <ellipse cx="888.5" cy="777.3" rx="3.4" ry="3.2" fill="#a03030"/>
  <path d="M909 771.5 L926 777" stroke="#4a8a2a" stroke-width="3.6"/>
  <ellipse cx="927" cy="777.3" rx="3.3" ry="3.1" fill="#4e9a2e"/>
  <text x="909" y="739.3" font-family="Liberation Sans" font-size="9.4" fill="#2f56d0" text-anchor="middle">Z</text>
  <text x="876.5" y="782" font-family="Liberation Sans" font-size="9" fill="#d04040">X</text>
  <text x="932.5" y="782" font-family="Liberation Sans" font-size="9" fill="#7abf4a">Y</text>
  <!-- cube -->
  <polygon points="1189.3,504.6 1222.2,497.5 1252.4,505.4 1219.4,512.5" fill="#959595" stroke="#1e6898" stroke-width="1.1"/>
  <polygon points="1189.3,504.6 1219.4,512.5 1219.4,556.2 1189.3,548.4" fill="#8a8a8a" stroke="#1e6898" stroke-width="1.1"/>
  <polygon points="1219.4,512.5 1252.4,505.4 1252.4,549.5 1219.4,556.2" fill="#8c8c8c" stroke="#1e6898" stroke-width="1.1"/>
<text x="0" y="0" font-family="Liberation Sans" font-size="18" fill="#151515" text-anchor="middle" transform="translate(1204.3 534.5) skewY(12.8) scale(0.37 1)">RIGHT</text>
<text x="0" y="0" font-family="Liberation Sans" font-size="18" fill="#151515" text-anchor="middle" transform="translate(1236.4 536.8) skewY(-13.5) scale(0.4 1)">BACK</text>
 </g>
 <!-- dividers -->
 <rect x="858" y="152" width="1" height="671" fill="#c8c8c8"/>
 <rect x="459" y="486" width="802" height="1" fill="#c8c8c8"/>
</svg>

<!-- playback bar -->
<div class="a" style="left:459px;top:823px;width:802px;height:2px;background:#000;"></div>
<div class="a" style="left:459px;top:825px;width:802px;height:40px;background:#e4edf5;"></div>
<svg width="1262" height="888" style="left:0;top:0;">
 <!-- buttons -->
 <rect x="461.5" y="829.5" width="36" height="29" rx="3" fill="#e9eef3" stroke="#c6c6c6"/>
 <rect x="499.5" y="829.5" width="36" height="29" rx="3" fill="#e9eef3" stroke="#c6c6c6"/>
 <rect x="537.5" y="829.5" width="36" height="29" rx="3" fill="#f4f4f4" stroke="#7a7a7a"/>
 <rect x="575.5" y="829.5" width="37" height="29" rx="3" fill="#f4f4f4" stroke="#7a7a7a"/>
 <!-- first icon -->
 <rect x="468.5" y="833.5" width="3.5" height="21" fill="#d6e8f8" stroke="#9ab8dc" stroke-width="0.9"/>
 <path d="M473.5 844 L485.5 833.5 L485.5 839.5 L491.5 839.5 L491.5 848.5 L485.5 848.5 L485.5 854.5 Z" fill="#d6e8f8" stroke="#9ab8dc" stroke-width="0.9"/>
 <!-- second icon -->
 <path d="M508.5 844.5 L521.5 834.8 L521.5 854.2 Z" fill="#d6e8f8" stroke="#9ab8dc" stroke-width="0.9"/>
 <rect x="524.5" y="834.5" width="4" height="20" fill="#d6e8f8" stroke="#9ab8dc" stroke-width="0.9"/>
 <!-- play -->
 <path d="M549.5 834.5 L562.5 844.5 L549.5 854.5 Z" fill="#bfe0ff" stroke="#1a5fb4" stroke-width="1.2"/>
 <!-- step fwd -->
 <rect x="583" y="834.3" width="3.5" height="20" fill="#bfe0ff" stroke="#1a5fb4" stroke-width="1.1"/>
 <path d="M590 834.5 L603.5 844.5 L590 854.5 Z" fill="#bfe0ff" stroke="#1a5fb4" stroke-width="1.2"/>
 <!-- slider -->
 <rect x="625" y="834" width="362" height="6" fill="#d9d9d9"/>
 <!-- loop -->
 <rect x="998.5" y="829.5" width="37" height="29" rx="3.5" fill="#f4f4f4" stroke="#7a7a7a" stroke-width="1.1"/>
 <path d="M1006 838.3 L1013.5 832.8 L1013.5 836.8 L1020.5 836.8 Q1025.3 837 1025.3 841.5 L1025.3 843.5 L1022.2 843.5 L1022.2 841.8 Q1022.2 840.5 1020.5 840.5 L1013.5 840.5 L1013.5 843.8 Z" fill="#bfe0ff" stroke="#1a5fb4" stroke-width="1.1" stroke-linejoin="round"/>
 <path d="M1027.8 849.3 L1020.5 844.5 L1020.5 847.8 L1013 847.8 Q1011.6 847.8 1011.6 846.3 L1011.6 844.2 L1008.5 844.2 L1008.5 846.5 Q1008.5 851.3 1013 851.3 L1020.5 851.3 L1020.5 854.5 Z" fill="#bfe0ff" stroke="#1a5fb4" stroke-width="1.1" stroke-linejoin="round"/>
 <!-- minus -->
 <rect x="1044.5" y="832.5" width="30" height="21" rx="3" fill="#f4f4f4" stroke="#858585" stroke-width="1.1"/>
 <rect x="1052.5" y="840.3" width="15" height="5.3" fill="#bfe0ff" stroke="#1a5fb4" stroke-width="1.1"/>
 <!-- speed box -->
 <rect x="1077.7" y="832.7" width="60.6" height="20.6" fill="#e4edf5" stroke="#111" stroke-width="1.4"/>
 <!-- plus -->
 <rect x="1141.5" y="832.5" width="30" height="21" rx="3" fill="#f4f4f4" stroke="#a0a0a0" stroke-width="1.1"/>
 <path d="M1153.8 835.5 L1158.3 835.5 L1158.3 840.8 L1163.6 840.8 L1163.6 845.3 L1158.3 845.3 L1158.3 850.6 L1153.8 850.6 L1153.8 845.3 L1148.5 845.3 L1148.5 840.8 L1153.8 840.8 Z" fill="#bfe0ff" stroke="#1a5fb4" stroke-width="1.1"/>
 <!-- frame box -->
 <rect x="1180.7" y="833.7" width="72" height="19.6" fill="#e4edf5" stroke="#111" stroke-width="1.4"/>
 <!-- resize grip -->
 <g fill="#9a9a9a">
  <rect x="1255" y="877" width="1.5" height="1.5"/>
  <rect x="1252" y="880" width="1.5" height="1.5"/><rect x="1255" y="880" width="1.5" height="1.5"/>
  <rect x="1249" y="883" width="1.5" height="1.5"/><rect x="1252" y="883" width="1.5" height="1.5"/><rect x="1255" y="883" width="1.5" height="1.5"/>
 </g>
</svg>
<div class="t" style="left:623.5px;top:843.5px;font-size:13.3px;color:#1a1a1a;">0</div>
<div class="t" style="left:973px;top:843.5px;font-size:13.3px;color:#1a1a1a;">25</div>
<div class="t" style="left:1096px;top:837px;font-size:12.5px;color:#6a6a6a;">1</div>
<div class="t" style="left:1126px;top:835.5px;font-size:13.5px;color:#333;">x</div>
<div class="t" style="left:1183px;top:837px;font-size:12.5px;color:#6a6a6a;">0</div>


</body></html>
